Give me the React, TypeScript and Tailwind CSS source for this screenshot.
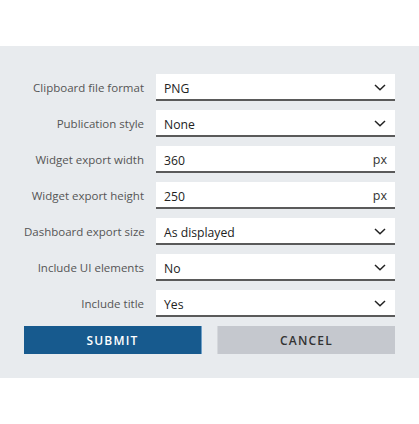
const rows: { label: string; value: string; kind: "select" | "px" }[] = [
  { label: "Clipboard file format", value: "PNG", kind: "select" },
  { label: "Publication style", value: "None", kind: "select" },
  { label: "Widget export width", value: "360", kind: "px" },
  { label: "Widget export height", value: "250", kind: "px" },
  { label: "Dashboard export size", value: "As displayed", kind: "select" },
  { label: "Include UI elements", value: "No", kind: "select" },
  { label: "Include title", value: "Yes", kind: "select" },
];

function Chevron() {
  return (
    <svg width="12" height="7" viewBox="0 0 12 7" fill="none">
      <path d="M1 1L6 5.8L11 1" stroke="#222" strokeWidth="1.5" />
    </svg>
  );
}

export default function App() {
  return (
    <div className="w-[419px] h-[424px] bg-white font-['Open_Sans',sans-serif]">
      <div className="h-[46px]" />
      {/* Settings panel */}
      <div className="bg-[#e8ebee] px-6 pt-[28px] pb-6 flex flex-col gap-[9px]">
        {rows.map((r) => (
          <div key={r.label} className="flex items-center gap-3">
            <div className="w-[120px] pt-[1px] text-right text-[11.5px] text-[#555] whitespace-nowrap">
              {r.label}
            </div>
            <div className="flex-1 h-[27px] bg-white border-b-2 border-[#5a5a5a] flex items-center pl-2 pr-[8px]">
              <span className="flex-1 pt-[4px] text-[12.2px] leading-[16px] text-[#222]">{r.value}</span>
              {r.kind === "select" ? (
                <span className="pr-[1px] pt-[1px]">
                  <Chevron />
                </span>
              ) : (
                <span className="pt-[3px] text-[12.5px] leading-[16px] text-[#333]">px</span>
              )}
            </div>
          </div>
        ))}
        <div className="flex gap-[15px]">
          <button className="flex-1 h-[28px] pt-[2px] bg-[#175a8e] border-r border-[#6fa0c8] text-white text-[12px] font-semibold tracking-[0.1em]">
            SUBMIT
          </button>
          <button className="flex-1 h-[28px] pt-[2px] bg-[#c5c8ce] border-l border-[#d5d8dc] text-[#333] text-[12px] font-semibold tracking-[0.1em]">
            CANCEL
          </button>
        </div>
      </div>
    </div>
  );
}
